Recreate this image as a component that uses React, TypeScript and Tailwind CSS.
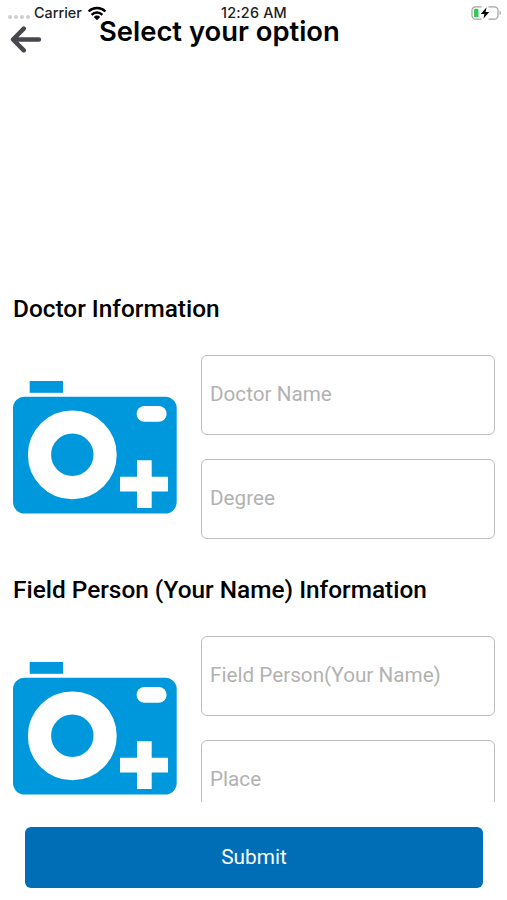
import { useState } from 'react';

type Field = { name: string; placeholder: string };
type Section = { title: string; fields: Field[] };

const SECTIONS: Section[] = [
  {
    title: 'Doctor Information',
    fields: [
      { name: 'doctorName', placeholder: 'Doctor Name' },
      { name: 'degree', placeholder: 'Degree' },
    ],
  },
  {
    title: 'Field Person (Your Name) Information',
    fields: [
      { name: 'fieldPerson', placeholder: 'Field Person(Your Name)' },
      { name: 'place', placeholder: 'Place' },
    ],
  },
];

function WifiIcon() {
  return (
    <svg width="20" height="15" viewBox="0 0 20 15" fill="none" stroke="#000" strokeWidth="2.4">
      <path d="M1.6 5.5a12 12 0 0 1 16.8 0" />
      <path d="M4.6 8.8a7.6 7.6 0 0 1 10.8 0" />
      <path d="M10 14.2l-3.2-3.3a4.6 4.6 0 0 1 6.4 0z" fill="#000" stroke="none" />
    </svg>
  );
}

function BatteryIcon() {
  return (
    <svg width="31" height="14" viewBox="0 0 31 14" fill="none">
      <path
        d="M10.5 .8H4.5A3.5 3.5 0 0 0 1 4.3v5.4a3.5 3.5 0 0 0 3.5 3.5h6M17.5 .8h6A3.5 3.5 0 0 1 27 4.3v5.4a3.5 3.5 0 0 1-3.5 3.5h-6"
        stroke="#a3a3a3"
        strokeWidth="1.2"
      />
      <path d="M28.6 4.8v4.4c1.7-.6 1.7-3.8 0-4.4z" fill="#a3a3a3" />
      <rect x="3" y="2.8" width="4.5" height="8.4" rx="1" fill="#34c759" />
      <path d="M15.6 1.2L9.8 7.9h3.6l-1 4.9 5.8-6.9h-3.6z" fill="#000" />
    </svg>
  );
}

function StatusBar() {
  return (
    <div className="flex h-[18px] items-center pt-2 pl-2 pr-[5px] font-['Inter',sans-serif] text-[14.4px] leading-none font-medium text-[#222]">
      <div className="flex flex-1 items-center">
        <span className="mt-[7px] flex gap-[2px]">
          {[0, 1, 2, 3].map((i) => (
            <span key={i} className="size-[4px] rounded-full bg-[#cfcfcf]" />
          ))}
        </span>
        <span className="ml-[4px]">Carrier</span>
        <span className="ml-[5px]">
          <WifiIcon />
        </span>
      </div>
      <span className="-ml-[2px] tracking-[0.2px]">12:26 AM</span>
      <div className="flex flex-1 justify-end">
        <BatteryIcon />
      </div>
    </div>
  );
}

function Header() {
  return (
    <header className="flex h-[44px] items-start pl-[9px]">
      <button aria-label="Back" className="mt-[8px]">
        <svg
          width="33"
          height="27"
          viewBox="0 0 33 27"
          fill="none"
          stroke="#48474e"
          strokeWidth="4.4"
          strokeLinecap="round"
          strokeLinejoin="round"
        >
          <path d="M14.8 2.6L4 13.5 14.8 24.4M4.5 13.5H30" />
        </svg>
      </button>
      <h1 className="ml-[57px] font-['Inter',sans-serif] text-[27.4px] leading-[26px] font-semibold text-black">
        Select your option
      </h1>
    </header>
  );
}

function AddPhoto() {
  return (
    <svg width="164" height="134" viewBox="0 0 164 134" fill="#0098dd">
      <rect x="16.7" y="1" width="33.3" height="11.8" />
      <rect x="0" y="16.7" width="163.7" height="116.8" rx="11.5" />
      <circle cx="59.3" cy="74.8" r="32.8" fill="none" stroke="#fff" strokeWidth="23.2" />
      <rect x="123.6" y="26" width="30" height="15.8" rx="7.9" fill="#fff" />
      <path d="M124 80.3h14.7v16.4h16.3v14.7h-16.3V128H124v-16.6h-17V96.7h17z" fill="#fff" />
    </svg>
  );
}

export default function App() {
  const [values, setValues] = useState<Record<string, string>>({});

  return (
    <div className="flex h-[900px] w-[507px] flex-col overflow-hidden bg-white font-['Roboto',sans-serif]">
      <StatusBar />
      <Header />

      {/* the list is clipped above the submit bar */}
      <main className="flex h-[740px] shrink-0 flex-col gap-9 overflow-hidden pt-[232px] pr-3 pl-[13px]">
        {SECTIONS.map((section) => (
          <section key={section.title} className="shrink-0">
            <h2 className="text-[24.4px] leading-[30px] font-medium text-black">{section.title}</h2>
            <div className="mt-[31px] flex gap-6">
              <button aria-label="Add photo" className="mt-[25px] shrink-0 self-start">
                <AddPhoto />
              </button>
              <div className="flex flex-1 flex-col gap-6">
                {section.fields.map((f) => (
                  <input
                    key={f.name}
                    className="h-20 w-full rounded-md border border-[#bebebe] px-2 pb-[2px] text-[20.7px] text-black outline-none placeholder:text-[#b2b2b2]"
                    placeholder={f.placeholder}
                    value={values[f.name] ?? ''}
                    onChange={(e) => setValues({ ...values, [f.name]: e.target.value })}
                  />
                ))}
              </div>
            </div>
          </section>
        ))}
      </main>

      <div className="pt-[25px] pr-[24px] pl-[25px]">
        <button className="h-[61px] w-full rounded-md bg-[#006db7] text-[20.8px] text-white">Submit</button>
      </div>
    </div>
  );
}
